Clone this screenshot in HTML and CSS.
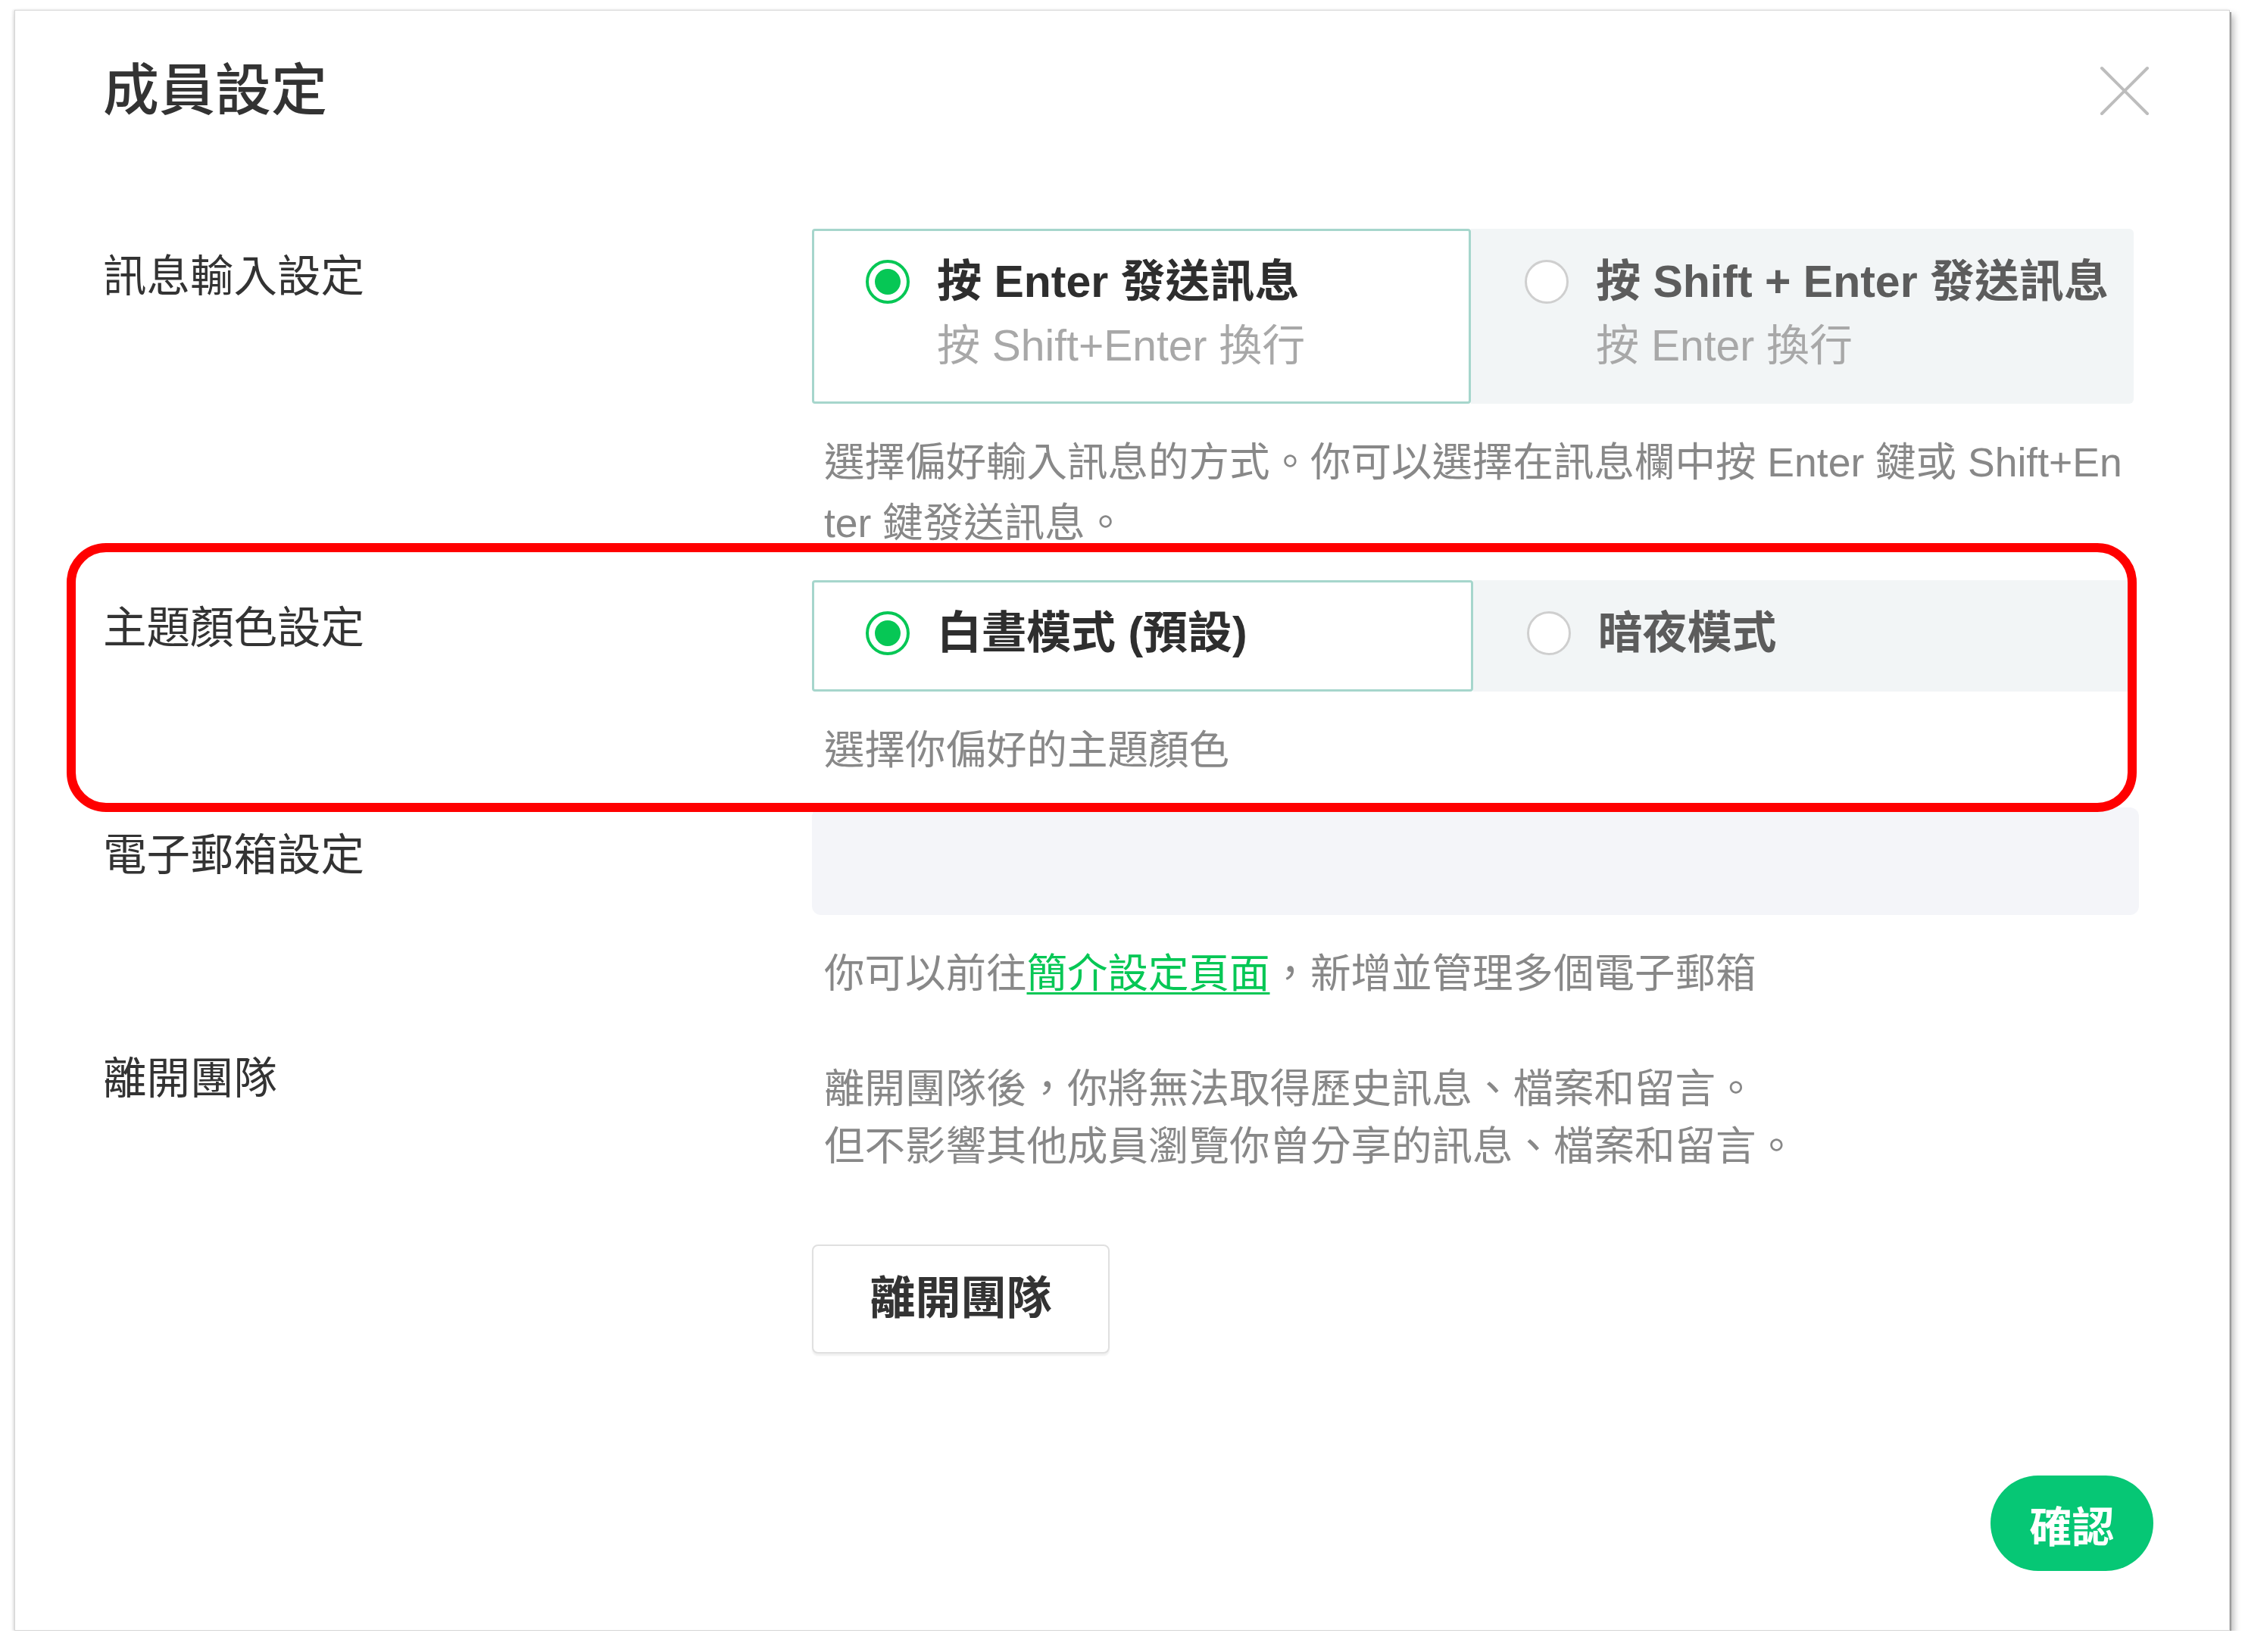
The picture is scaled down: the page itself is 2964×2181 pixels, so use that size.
FILE: index.html
```html
<!DOCTYPE html>
<html lang="zh-Hant">
<head>
<meta charset="utf-8">
<title>成員設定</title>
<link rel="stylesheet" href="styles.css">
</head>
<body>
<div class="frame">
  <div class="header">
    <h1 class="title">成員設定</h1>
    <button class="close" aria-label="關閉">
      <svg width="66" height="66" viewBox="0 0 66 66"><path d="M3 3 L63 63 M63 3 L3 63" stroke="#bdbdbd" stroke-width="4" stroke-linecap="round" fill="none"/></svg>
    </button>
  </div>

  <div class="section">
    <div class="label">訊息輸入設定</div>
    <div class="content">
      <div class="options">
        <div class="option selected">
          <span class="radio on"></span>
          <div class="opt-text">
            <div class="opt-title">按 Enter 發送訊息</div>
            <div class="opt-sub">按 Shift+Enter 換行</div>
          </div>
        </div>
        <div class="option">
          <span class="radio"></span>
          <div class="opt-text">
            <div class="opt-title">按 Shift + Enter 發送訊息</div>
            <div class="opt-sub">按 Enter 換行</div>
          </div>
        </div>
      </div>
      <p class="desc wrap">選擇偏好輸入訊息的方式。你可以選擇在訊息欄中按 Enter 鍵或 Shift+Enter 鍵發送訊息。</p>
    </div>
  </div>

  <div class="section">
    <div class="label">主題顏色設定</div>
    <div class="content">
      <div class="options">
        <div class="option selected">
          <span class="radio on"></span>
          <div class="opt-text">
            <div class="opt-title">白晝模式 (預設)</div>
          </div>
        </div>
        <div class="option">
          <span class="radio"></span>
          <div class="opt-text">
            <div class="opt-title">暗夜模式</div>
          </div>
        </div>
      </div>
      <p class="desc">選擇你偏好的主題顏色</p>
    </div>
  </div>

  <div class="section">
    <div class="label">電子郵箱設定</div>
    <div class="content">
      <div class="email-box"></div>
      <p class="desc">你可以前往<a class="link" href="#">簡介設定頁面</a>，新增並管理多個電子郵箱</p>
    </div>
  </div>

  <div class="section">
    <div class="label">離開團隊</div>
    <div class="content">
      <p class="desc leave-desc">離開團隊後，你將無法取得歷史訊息、檔案和留言。<br>但不影響其他成員瀏覽你曾分享的訊息、檔案和留言。</p>
      <button class="leave-btn">離開團隊</button>
    </div>
  </div>

  <div class="footer">
    <button class="confirm">確認</button>
  </div>

  <div class="highlight"></div>
</div>
</body>
</html>
```

FILE: styles.css
```css
* { box-sizing: border-box; }

body {
  margin: 0;
  background: #ffffff;
  font-family: "Liberation Sans", "Noto Sans CJK TC", sans-serif;
  color: #333333;
}

.frame {
  position: relative;
  margin: 13px 0 0 19px;
  width: 2925px;
  height: 2140px;
  background: #ffffff;
  border: 1px solid #d6d6d6;
  box-shadow: 2px 3px 0 #9a9a9a, 5px 7px 9px rgba(0, 0, 0, 0.28), -2px 0 3px rgba(0, 0, 0, 0.1);
  padding: 56px 119px 78px 116px;
  display: flex;
  flex-direction: column;
}

.header {
  display: flex;
  justify-content: space-between;
  align-items: center;
  margin-bottom: 132px;
}

.title {
  margin: 0;
  font-size: 74px;
  line-height: 100px;
  font-weight: 500;
  color: #333333;
}

.close {
  border: 0;
  background: none;
  padding: 0;
  margin-right: -14px;
  width: 66px;
  height: 66px;
  display: flex;
}

.section {
  display: grid;
  grid-template-columns: 936px 1fr;
  margin-bottom: 35px;
}

.label {
  padding-top: 23px;
  font-size: 57.5px;
  line-height: 80px;
  color: #333333;
}

.content {
  min-width: 0;
}

.options {
  display: flex;
  width: 1745px;
}

.option {
  flex: 1 1 0;
  display: flex;
  align-items: flex-start;
  gap: 36px;
  padding: 25px 30px 32px 68px;
  background: #f2f5f6;
  border: 3px solid transparent;
  border-radius: 0 6px 6px 0;
}

.option.selected {
  background: #ffffff;
  border-color: #a6d6cc;
  border-radius: 4px;
}

.radio {
  flex: none;
  width: 58px;
  height: 58px;
  margin-top: 13px;
  border-radius: 50%;
  border: 3px solid #cfcfcf;
  background: #ffffff;
  position: relative;
}

.radio.on {
  border: 4px solid #06c755;
}

.radio.on::after {
  content: "";
  position: absolute;
  left: 8px;
  top: 8px;
  width: 34px;
  height: 34px;
  border-radius: 50%;
  background: #06c755;
}

.opt-title {
  font-size: 59px;
  line-height: 84px;
  font-weight: 700;
  color: #5c5c5c;
  white-space: nowrap;
}

.option.selected .opt-title {
  color: #2e2e2e;
}

.opt-sub {
  font-size: 57px;
  line-height: 84px;
  color: #a8a8a8;
  white-space: nowrap;
}

.desc {
  margin: 38px 0 0 0;
  padding: 0 16px;
  font-size: 53.5px;
  line-height: 80px;
  color: #888888;
  word-break: break-all;
}

.desc.wrap {
  padding-right: 18px;
}

.leave-desc {
  margin-top: 39px;
  line-height: 76px;
}

.link {
  color: #06c755;
  text-decoration: underline;
  text-decoration-thickness: 3px;
  text-underline-offset: 6px;
}

.email-box {
  height: 142px;
  background: #f4f5f9;
  border-radius: 12px;
}

.leave-btn {
  display: block;
  margin-top: 91px;
  width: 393px;
  height: 144px;
  background: #ffffff;
  border: 2px solid #e0e0e0;
  border-radius: 8px;
  box-shadow: 0 3px 2px rgba(0, 0, 0, 0.06);
  font-family: inherit;
  font-size: 60px;
  line-height: 80px;
  font-weight: 700;
  color: #333333;
  padding: 0;
}

.footer {
  margin-top: auto;
  display: flex;
  justify-content: flex-end;
}

.confirm {
  margin-right: -19px;
  width: 215px;
  height: 126px;
  border: 0;
  border-radius: 63px;
  background: #06c775;
  color: #ffffff;
  font-family: inherit;
  font-size: 56px;
  font-weight: 700;
  padding: 0;
}

.highlight {
  position: absolute;
  left: 68px;
  top: 703px;
  width: 2733px;
  height: 355px;
  border: 12px solid #ff0000;
  border-radius: 52px;
  pointer-events: none;
}
```
